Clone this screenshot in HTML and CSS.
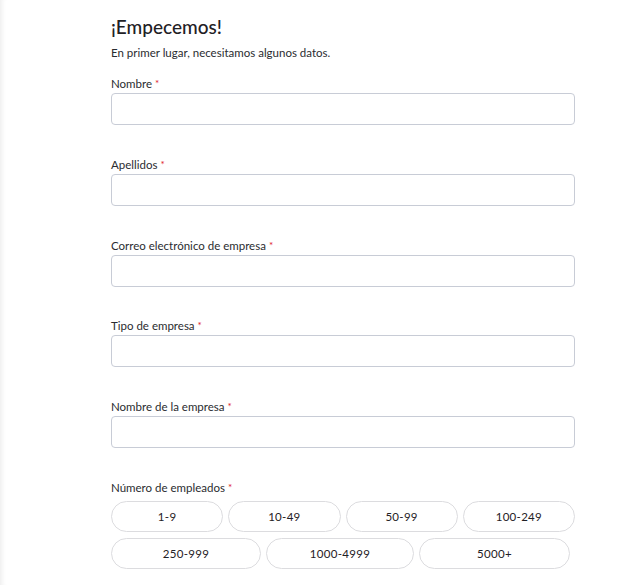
FILE: index.html
```html
<!DOCTYPE html>
<html lang="es">
<head>
<meta charset="utf-8">
<title>¡Empecemos!</title>
<link rel="stylesheet" href="styles.css">
</head>
<body>
<div class="page">
  <main class="form">
    <h1 class="title">¡Empecemos!</h1>
    <p class="subtitle">En primer lugar, necesitamos algunos datos.</p>

    <div class="field">
      <label class="label">Nombre<span class="req">*</span></label>
      <input class="input" type="text">
    </div>
    <div class="field">
      <label class="label">Apellidos<span class="req">*</span></label>
      <input class="input" type="text">
    </div>
    <div class="field">
      <label class="label">Correo electrónico de empresa<span class="req">*</span></label>
      <input class="input" type="text">
    </div>
    <div class="field">
      <label class="label">Tipo de empresa<span class="req">*</span></label>
      <input class="input" type="text">
    </div>
    <div class="field">
      <label class="label">Nombre de la empresa<span class="req">*</span></label>
      <input class="input" type="text">
    </div>
    <div class="field">
      <label class="label">Número de empleados<span class="req">*</span></label>
      <div class="pills">
        <div class="pill-row row-4">
          <button class="pill">1-9</button>
          <button class="pill">10-49</button>
          <button class="pill">50-99</button>
          <button class="pill">100-249</button>
        </div>
        <div class="pill-row row-3">
          <button class="pill">250-999</button>
          <button class="pill">1000-4999</button>
          <button class="pill">5000+</button>
        </div>
      </div>
    </div>
  </main>
</div>
</body>
</html>
```

FILE: styles.css
```css
* { box-sizing: border-box; }
html, body { margin: 0; padding: 0; background: #fff; }
body {
  font-family: "Lato", "Inter", "Noto Sans", sans-serif;
  color: #222428;
}
.page {
  min-height: 585px;
  box-shadow: inset 6px 0 5px -4px rgba(0, 0, 0, 0.07);
  padding: 15px 0 0 111px;
}
.form { width: 464px; }
.title {
  margin: 0;
  font-size: 19px;
  font-weight: 500;
  line-height: 24px;
  color: #1f2125;
}
.subtitle {
  margin: 7px 0 0;
  font-size: 11.5px;
  line-height: 14px;
  color: #2a2c30;
}
.field { margin-top: 16px; }
.field + .field { margin-top: 31.75px; }
.label {
  display: block;
  font-size: 11.5px;
  line-height: 14px;
  color: #2a2c30;
  margin-bottom: 2px;
}
.req { color: #e0202a; margin-left: 3px; font-size: 10px; vertical-align: 1px; }
.input {
  display: block;
  width: 464px;
  height: 32px;
  border: 1px solid #c8ccd6;
  border-radius: 4px;
  background: #fff;
  font: inherit;
  padding: 0 10px;
}
.pills { display: flex; flex-direction: column; gap: 6px; padding-top: 4.5px; }
.pill-row { display: flex; gap: 5px; }
.row-4 .pill { flex: 1 1 0; }
.row-3 { width: 459px; }
.row-3 .pill:nth-child(1) { width: 150px; }
.row-3 .pill:nth-child(2) { width: 148px; }
.row-3 .pill:nth-child(3) { width: 151px; }
.pill {
  height: 31px;
  border: 1px solid #dcdcdf;
  border-radius: 16px;
  background: #fff;
  font-family: inherit;
  font-size: 11.5px;
  letter-spacing: 0.3px;
  color: #1f2125;
  padding: 0;
  cursor: pointer;
}
```
